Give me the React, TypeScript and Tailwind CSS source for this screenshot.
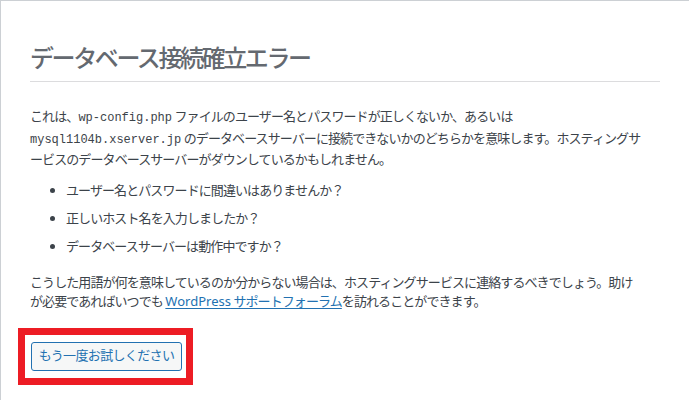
import React from "react";

const jp = "[font-family:'Noto_Sans','Noto_Sans_CJK_JP',sans-serif]";
const mono = "font-['Liberation_Mono',monospace] text-[12px] tracking-normal";

const checks = [
  "ユーザー名とパスワードに間違いはありませんか？",
  "正しいホスト名を入力しましたか？",
  "データベースサーバーは動作中ですか？",
];

export default function App() {
  return (
    <div className={`w-[689px] h-[400px] overflow-hidden bg-white ${jp}`}>
      <div className="h-full border-t border-l border-[#ccd0d4] pt-[40px] pl-[29px] pr-[29px] text-[#3c434a]">
        <h1 className="text-[24px] leading-[34px] font-medium text-[#646970] pb-[6px] border-b border-[#dcdcde] tracking-[-0.1em]">
          データベース接続確立エラー
        </h1>

        <p className="mt-[25px] text-[13px] leading-[19.5px] tracking-[-0.07em] whitespace-nowrap">
          これは、<code className={mono}>wp-config.php</code> ファイルのユーザー名とパスワードが正しくないか、あるいは
          <br />
          <code className={mono}>mysql1104b.xserver.jp</code> のデータベースサーバーに接続できないかのどちらかを意味します。ホスティングサ
          <br />
          ービスのデータベースサーバーがダウンしているかもしれません。
        </p>

        <ul className="mt-[10px] pl-[36px] text-[13px] leading-[20px] tracking-[-0.07em] list-disc">
          {checks.map((c) => (
            <li key={c} className="mb-[8px]">
              {c}
            </li>
          ))}
        </ul>

        <p className="mt-[17px] text-[13px] leading-[19.5px] tracking-[-0.07em] whitespace-nowrap">
          こうした用語が何を意味しているのか分からない場合は、ホスティングサービスに連絡するべきでしょう。助け
          <br />
          が必要であればいつでも{" "}
          <a href="#" className="text-[#2271b1] underline underline-offset-2">
            <span className="tracking-normal">WordPress</span> サポートフォーラム
          </a>
          を訪れることができます。
        </p>

        <div className="mt-[16px] -ml-[12px] w-[175px] border-[7px] border-[#ed1c24] pl-[6px] py-[7px]">
          <button className="block h-[29px] w-[151px] rounded-[3px] border border-[#2271b1] bg-[#f6f7f7] text-[13px] tracking-[-0.05em] text-[#2271b1]">
            もう一度お試しください
          </button>
        </div>
      </div>
    </div>
  );
}
